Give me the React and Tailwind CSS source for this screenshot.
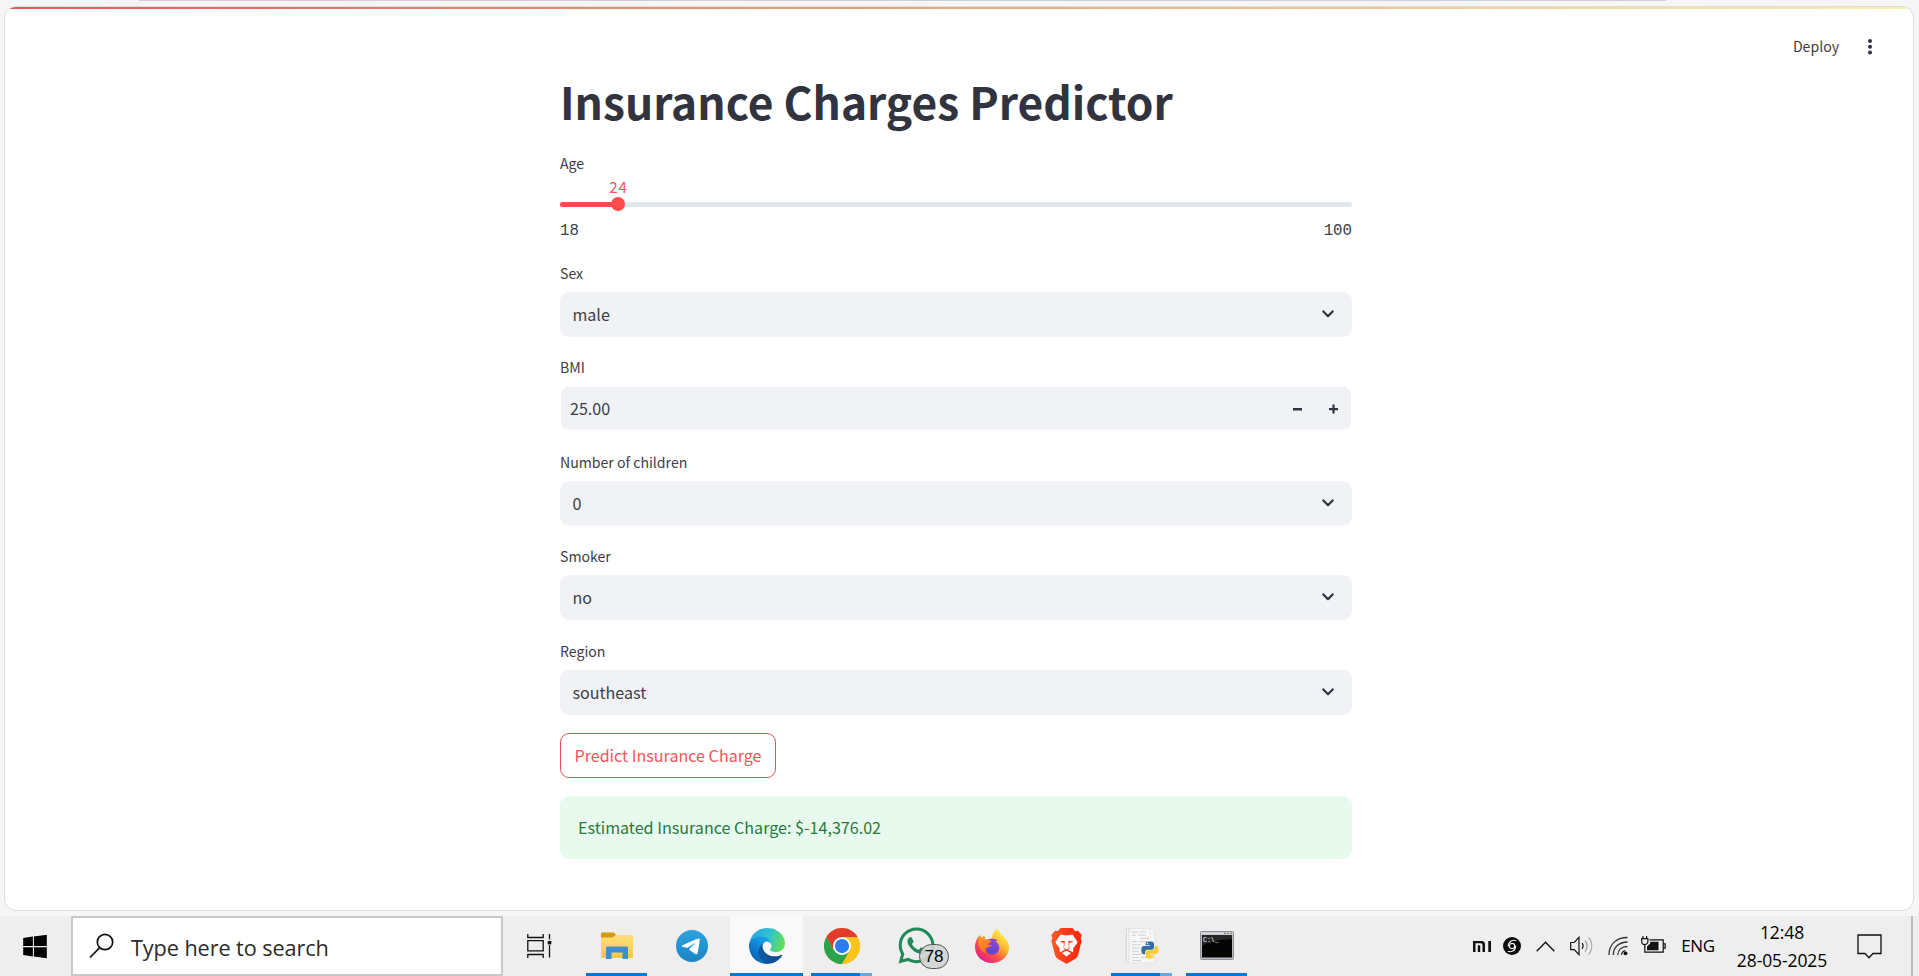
import React from "react";
import { FaWindows, FaWhatsapp } from "react-icons/fa";

const ui = "font-['Noto_Sans_CJK_SC','Noto_Sans',sans-serif]";

function Chevron() {
  return (
    <svg width="12" height="8" viewBox="0 0 12 8" fill="none" stroke="#31333f" strokeWidth="2.2" strokeLinecap="round" strokeLinejoin="round">
      <path d="M1.4 1.4 6 6.2l4.6-4.8" />
    </svg>
  );
}

function Field({ label, children }) {
  return (
    <div className="flex flex-col gap-2">
      <label className="h-[22px] text-[14.1px] leading-[22px] text-[#3c3e49]">{label}</label>
      {children}
    </div>
  );
}

function Select({ label, value }) {
  return (
    <Field label={label}>
      <div className="flex h-[45px] items-center justify-between rounded-[9px] bg-[#f0f2f6] pb-px pl-[12.4px] pr-[18px]">
        <span className="text-[16.1px] leading-[24px] text-[#3c3e49]">{value}</span>
        <Chevron />
      </div>
    </Field>
  );
}

function AgeSlider() {
  return (
    <div className="flex flex-col">
      <label className="h-[22px] text-[14.1px] leading-[22px] text-[#3c3e49]">Age</label>
      <div className="flex h-[22px] w-[117px] items-center justify-center pt-px text-[15.2px] leading-[20px] tracking-[0.9px] text-[#f65358]">24</div>
      <div className="relative mt-[6px] h-[5px] rounded-full bg-[#e4e6ed]">
        <div className="h-full w-[58px] rounded-full bg-[#ff4b4b]" />
        <div className="absolute left-[51px] top-[-5px] h-[14px] w-[14px] rounded-full bg-[#ff4b4b]" />
      </div>
      <div className="mt-[15px] flex h-[20px] items-center justify-between font-['Liberation_Mono',monospace] text-[15.75px] text-[#3c3e49]">
        <span>18</span>
        <span>100</span>
      </div>
    </div>
  );
}

function PredictorPage() {
  return (
    <div className="ml-[4px] mr-[5px] mt-[5px] flex h-[905px] flex-col overflow-hidden rounded-[12px] border border-[#dedede] bg-white">
      <div className="h-[2px] shrink-0 bg-linear-to-r from-[#da5a5f] via-[#eaa97c] to-[#f5f3a4]" />
      <div className="flex h-[62px] shrink-0 items-start justify-end pr-[37px] pt-[26px]">
        <span className="mr-[25px] text-[14.1px] leading-[22px] text-[#3c3e49]">Deploy</span>
        <svg className="mt-[3px]" width="12" height="18" viewBox="0 0 12 18" fill="#31333f">
          <circle cx="6" cy="3" r="2" /><circle cx="6" cy="8.8" r="2" /><circle cx="6" cy="14.6" r="2" />
        </svg>
      </div>
      <main className="ml-[555px] flex w-[792px] flex-col">
        <h1 className="h-[60px] whitespace-nowrap text-[44.3px] font-bold leading-[60px] text-[#31333f]">Insurance Charges Predictor</h1>
        <div className="mt-[21px]"><AgeSlider /></div>
        <div className="mt-[20px] flex flex-col gap-[19.4px]">
          <Select label="Sex" value="male" />
          <Field label="BMI">
            <div className="h-[45px] px-px pb-px pt-[1px]">
              <div className="flex h-[43px] items-center rounded-[8px] bg-[#f0f2f6] pl-[9px] pr-[13px]">
                <span className="flex-1 pb-px text-[16.1px] leading-[24px] text-[#3c3e49]">25.00</span>
                <svg width="9" height="10" viewBox="0 0 9 10" fill="#31333f"><rect y="4" width="9" height="2.5" /></svg>
                <svg className="ml-[27px]" width="9" height="10" viewBox="0 0 9 10" fill="#31333f"><rect y="4" width="9" height="2.2" /><rect x="3.4" y=".5" width="2.2" height="9" /></svg>
              </div>
            </div>
          </Field>
          <Select label="Number of children" value="0" />
          <Select label="Smoker" value="no" />
          <Select label="Region" value="southeast" />
        </div>
        <button className="mt-[18px] h-[45px] w-[216px] rounded-[9px] border border-[#e0525b] text-center text-[16.1px] leading-[41px] text-[#f65358]">Predict Insurance Charge</button>
        <div className="mt-[18px] flex h-[63px] items-center rounded-[9px] bg-[#e8f9ee] pb-px pl-[18px] text-[16.1px] leading-[24px] text-[#267a40]">Estimated Insurance Charge: $-14,376.02</div>
      </main>
    </div>
  );
}

function Folder() {
  return (
    <svg width="32" height="28" viewBox="0 0 32 28">
      <defs><linearGradient id="fo" x1="0" y1="0" x2="0" y2="1"><stop offset="0" stopColor="#ffdf79" /><stop offset="1" stopColor="#f7c64b" /></linearGradient></defs>
      <path d="M0 2a1.500 1.500 0 0 1 1.500-1.500H13l2 2.500L12.500 6H0z" fill="#d39b10" />
      <path d="M0 5.500h11.500L15 3h15.500A1.500 1.500 0 0 1 32 4.500V26H0z" fill="url(#fo)" />
      <path d="M5 27V16a1.500 1.500 0 0 1 1.500-1.500h19A1.500 1.500 0 0 1 27 16v11h-5.500v-6.500h-11V27z" fill="#3f8fd0" />
    </svg>
  );
}

function Telegram() {
  return (
    <svg width="32" height="32" viewBox="0 0 240 240">
      <defs><linearGradient id="tg" x1="0" y1="0" x2="0" y2="1"><stop offset="0" stopColor="#2ba3e0" /><stop offset="1" stopColor="#1c85c4" /></linearGradient></defs>
      <circle cx="120" cy="120" r="120" fill="url(#tg)" />
      <path d="M46 116C84 98 112 86 124.300 81C157.600 67 168 64 172 64C176 64 178 67 178 72C176 100 168 142 163 168C161 177 157.200 182 153 182C146 182 141 177 134 172L104 151C94 144 103 138 110 131L142 101C143 99 142 97 139 99L92 130C86 134 82 135 77 133L50 125C42 122 41 118 46 116z" fill="#fff" />
    </svg>
  );
}

function Edge() {
  return (
    <svg width="36" height="36" viewBox="0 0 256 256">
      <defs>
        <linearGradient id="e1" x1="60" y1="178" x2="238" y2="178" gradientUnits="userSpaceOnUse"><stop offset="0" stopColor="#0c59a4" /><stop offset="1" stopColor="#114a8b" /></linearGradient>
        <linearGradient id="e2" x1="150" y1="90" x2="45" y2="215" gradientUnits="userSpaceOnUse"><stop offset="0" stopColor="#1b9de2" /><stop offset=".3" stopColor="#1595df" /><stop offset="1" stopColor="#0b68bd" /></linearGradient>
        <linearGradient id="e3" x1="20" y1="60" x2="245" y2="130" gradientUnits="userSpaceOnUse"><stop offset="0" stopColor="#30a9e0" /><stop offset=".5" stopColor="#2fc3cf" /><stop offset="1" stopColor="#66e04f" /></linearGradient>
      </defs>
      <path fill="url(#e1)" d="M231 190.500c-3.400 1.800-6.900 3.400-10.500 4.700a101 101 0 0 1-35.900 6.500c-47.300 0-88.500-32.500-88.500-74.300a31.500 31.500 0 0 1 16.400-27.300c-42.800 1.800-53.800 46.400-53.800 72.500 0 73.900 68.100 81.400 82.800 81.400 7.900 0 19.800-2.300 27-4.600l1.300-.4a128.300 128.300 0 0 0 66.600-52.800 4 4 0 0 0-5.400-5.700z" />
      <path fill="url(#e2)" d="M105.700 241.400a79.200 79.200 0 0 1-22.700-21.300 80.700 80.700 0 0 1 29.500-120c3.200-1.500 8.500-4.100 15.600-4a32.400 32.400 0 0 1 25.700 13 31.900 31.900 0 0 1 6.300 18.700c0-.2 24.500-79.600-80-79.600-43.900 0-80 41.700-80 78.200a130.200 130.200 0 0 0 12.100 56 128 128 0 0 0 156.400 67 75.500 75.500 0 0 1-62.800-8z" />
      <path fill="url(#e3)" d="M152.300 148.900c-.9 1-3.400 2.500-3.400 5.600 0 2.600 1.700 5.200 4.800 7.300 14.300 10 41.400 8.600 41.500 8.600a59.600 59.600 0 0 0 30.300-8.300 61.400 61.400 0 0 0 30.400-52.900c.3-22.400-8-37.300-11.300-43.900C223.500 23.900 177.700 0 128 0A128 128 0 0 0 0 126.200c.5-36.500 36.800-66 80-66 3.500 0 23.500.3 42 10a72.600 72.600 0 0 1 30.900 29.300c6.100 10.600 7.200 24.100 7.200 29.500s-2.700 13.300-7.800 19.900z" />
    </svg>
  );
}

function Chrome() {
  return (
    <svg width="36" height="36" viewBox="0 0 48 48">
      <circle cx="24" cy="24" r="24" fill="#fcc31e" />
      <path d="M3.220 12A24 24 0 0 1 44.780 12H24L13.600 30z" fill="#e33b2e" />
      <path d="M3.220 12A24 24 0 0 0 24 48L34.400 30H13.600z" fill="#2da24c" />
      <path d="M24 12h20.780A24 24 0 0 1 24 48l10.400-18z" fill="#fcc31e" />
      <circle cx="24" cy="24" r="12" fill="#fff" />
      <circle cx="24" cy="24" r="9.500" fill="#2d7bf0" />
    </svg>
  );
}

function Firefox() {
  return (
    <svg width="34" height="34" viewBox="0 0 34 34">
      <defs>
        <linearGradient id="f1" x1="28" y1="4" x2="6" y2="32" gradientUnits="userSpaceOnUse"><stop offset="0" stopColor="#fff04a" /><stop offset=".35" stopColor="#ffb02e" /><stop offset=".65" stopColor="#ff4f44" /><stop offset="1" stopColor="#e0198e" /></linearGradient>
        <linearGradient id="f2" x1="22" y1="9" x2="13" y2="25" gradientUnits="userSpaceOnUse"><stop offset="0" stopColor="#9a45e0" /><stop offset="1" stopColor="#5a45c4" /></linearGradient>
        <linearGradient id="f3" x1="3" y1="8" x2="14" y2="22" gradientUnits="userSpaceOnUse"><stop offset="0" stopColor="#ff9a25" /><stop offset="1" stopColor="#ff6a2c" /></linearGradient>
      </defs>
      <path d="M21.500 0c2.500 1.500 4 3.600 4.600 5.600 3.100 1.600 7.900 7.600 7.900 12.600C34 27 26.500 34 17 34S0 27 0 18C0 13 2.500 8 5 6l.4 3.500L9 7l1.600 4L17 9c0-4 2-7 4.500-9z" fill="url(#f1)" />
      <path d="M13 10.500c3.500-1.500 7-1 10 1-1 .4-2 .5-2.600.9 2.600 1.300 4 3.600 3.900 6.400a7 7 0 0 1-14 0c0-3.600.7-6.800 2.700-8.300z" fill="url(#f2)" />
      <path d="M3.500 10.500 5 6.500l1.600 2.300L9.500 7l.7 3.600c2-.3 4.300.1 6 1.400.3 1.800-3.200 2.300-3.700 3.400 1.500.4 3 .2 4.200.9-.7 1.600-2.700 1.900-4.400 2.400-2.100.6-2.200 3.300-.2 5.100C6 23.500 2.500 17 3.500 10.500z" fill="url(#f3)" />
    </svg>
  );
}

function Brave() {
  return (
    <svg width="31" height="36" viewBox="0 0 31 36">
      <defs><linearGradient id="br" x1="0" y1="0" x2="1" y2="0"><stop offset="0" stopColor="#ff5a22" /><stop offset=".5" stopColor="#fb3a1c" /><stop offset="1" stopColor="#ff2600" /></linearGradient></defs>
      <path d="M9.600 0h11.800l2.900 3.200 2.700-.5 3.700 4.200-1 3 .9 3-3.500 13.800c-.6 2.200-1.400 3-3 4.200L17 35.100a2.500 2.500 0 0 1-3 0l-7.100-4.200c-1.600-1.200-2.400-2-3-4.200L.4 12.900l.9-3-1-3L4 2.700l2.700.5z" fill="url(#br)" />
      <path d="M9.500 6.500c1.500.1 3.400.9 6 .9s4.500-.8 6-.9c1 1.600 3.600 5 5 7.400-.2 1.800-3.500 5-4.300 6.500.5 1.600.3 2.800-.6 3.800-1.600-1.300-3.300-2-4.700-2.500l1.300-1c.6-2-.7-4.500.4-6l4-.9c-2-1.400-4.800-.6-6.500-.9h-1.200c-1.700.3-4.500-.5-6.500.9l4 .9c1.100 1.500-.2 4 .4 6l1.300 1c-1.400.5-3.100 1.200-4.700 2.500-.9-1-1.100-2.200-.6-3.800-.8-1.500-4.100-4.700-4.300-6.500 1.400-2.400 4-5.800 5-7.400z" fill="#fff" />
      <path d="M13.800 12.500h3.400l.7 7.400-2.400 1.600-2.400-1.600zM15.500 22.800c1.600.5 3 1.400 4.300 2.400l-4.300 3.400-4.300-3.400c1.300-1 2.700-1.900 4.300-2.400z" fill="#fff" />
    </svg>
  );
}

function PythonFile() {
  return (
    <svg width="34" height="36" viewBox="0 0 34 36">
      <path d="M1 .5h24l5 5.500V35H1z" fill="#f6f6f6" stroke="#dedede" strokeWidth=".7" />
      <path d="M25 .5V6h5" fill="#fff" stroke="#dadada" strokeWidth=".7" />
      <path d="M1.500 1v33M4 1v33" stroke="#c4c4c4" strokeWidth="1" strokeDasharray="1 1" />
      <path d="M7 4h6m2 0h6M7 7.200h4m2 0h8M15 10.400h9M7 13.600h5m2 0h8M7 16.800h9M7 20h8M7 23.200h7M7 26.400h9M7 29.600h7m2 0h6M7 32.600h9" stroke="#cacaca" strokeWidth=".9" />
      <g transform="translate(16.300 13.500) scale(.067)">
        <path d="M126.900.07c-64.800 0-60.800 28.100-60.800 28.100l.07 29.100h61.900v8.700H41.600S.15 61.300.15 126.900c0 65.700 36.200 63.300 36.200 63.300h21.600v-30.400s-1.200-36.200 35.600-36.200h61.300s34.500.56 34.500-33.300V34.300S194.600.07 126.900.07zM92.800 19.700a11.100 11.100 0 1 1 0 22.300 11.100 11.100 0 0 1 0-22.300z" fill="#336f9f" />
        <path d="M126.900.07c-64.800 0-60.800 28.100-60.800 28.100l.07 29.100h61.900v8.700H41.600S.15 61.300.15 126.900c0 65.700 36.200 63.300 36.200 63.300h21.600v-30.400s-1.200-36.200 35.600-36.200h61.300s34.500.56 34.500-33.300V34.300S194.600.07 126.900.07zM92.800 19.700a11.100 11.100 0 1 1 0 22.300 11.100 11.100 0 0 1 0-22.300z" fill="#fbcb3a" transform="rotate(180 128 127)" />
      </g>
    </svg>
  );
}

function Terminal() {
  return (
    <svg width="34" height="29" viewBox="0 0 34 29">
      <rect x=".5" y=".5" width="33" height="28" rx="1" fill="#b9bcc0" stroke="#8d9094" />
      <path d="M1 1.500h32v2H1z" fill="#d9dbde" />
      <path d="M24 2.400h2m1.500 0h1.500m1.500 0h1.500" stroke="#777" strokeWidth="1.200" />
      <rect x="2" y="4" width="30" height="22.500" fill="#050505" />
      <path d="M2 4h30v4C20 8.500 8 11 2 15z" fill="#3b3b3b" opacity=".6" />
      <text x="3" y="11" fontSize="6.500" fill="#fff" fontFamily="Liberation Mono, monospace">C:\_</text>
    </svg>
  );
}

function Task({ children, bar, active }) {
  return (
    <div className="relative flex h-full w-[75px] items-center justify-center">
      {active && <div className="absolute inset-y-0 left-[1px] w-[73px] bg-[#f9f9f9]" />}
      <div className="relative -mt-[1px]">{children}</div>
      {bar === "one" && <div className="absolute bottom-0 left-[7px] h-[3px] w-[61px] bg-[#0b76d0]" />}
      {bar === "wide" && <div className="absolute bottom-0 left-[1px] h-[3px] w-[73px] bg-[#0b76d0]" />}
      {bar === "two" && (
        <div className="absolute bottom-0 left-[7px] flex h-[3px] w-[61px]">
          <div className="w-[49px] bg-[#0b76d0]" /><div className="w-[12px] bg-[#6aa8de]" />
        </div>
      )}
    </div>
  );
}

function Taskbar() {
  return (
    <div className="flex h-[60px] items-stretch bg-[#eeeeee] font-['Open_Sans','Noto_Sans',sans-serif] text-black">
      <div className="flex w-[71px] items-center justify-center pr-px"><FaWindows className="h-[27px] w-[24px]" /></div>
      <div className="flex w-[432px] items-center border-2 border-[#c8c8c8] bg-white pl-[16px]">
        <svg width="25" height="26" viewBox="0 0 25 26" fill="none" stroke="#111" strokeWidth="1.700"><circle cx="16" cy="9" r="7.700" /><path d="M10.700 14.600 1 24.500" /></svg>
        <span className="ml-[17px] mt-[3px] text-[21.700px] leading-[30px] tracking-[-0.100px] text-[#2b2b2b]">Type here to search</span>
      </div>
      <div className="flex w-[76px] items-center justify-center pr-[3px]">
        <svg width="25" height="24" viewBox="0 0 25 24" fill="none" stroke="#111" strokeWidth="1.300"><path d="M.8 0v3.500h15.400V0M.8 24v-3.500h15.400V24M.8 6.600h15.400v10.300H.8zM22.500 0v5.500M22.500 11v12.500" /><path d="M20.700 7h3.600v3.400h-3.600z" fill="#111" stroke="none" /></svg>
      </div>
      <Task bar="one"><Folder /></Task>
      <Task><Telegram /></Task>
      <Task bar="wide" active><Edge /></Task>
      <Task bar="two"><Chrome /></Task>
      <Task>
        <FaWhatsapp className="h-[41px] w-[41px] text-[#1f8a58]" />
        <div className="absolute left-[23px] top-[19px] flex h-[25px] w-[30px] items-center justify-center rounded-full border border-[#555] bg-[#d2d4d3]/90 font-['Liberation_Sans',sans-serif] text-[17px] leading-none">78</div>
      </Task>
      <Task><Firefox /></Task>
      <Task><Brave /></Task>
      <Task bar="two"><PythonFile /></Task>
      <Task bar="one"><Terminal /></Task>
      <div className="flex flex-1 items-stretch justify-end">
        <div className="flex w-[30px] items-center justify-center">
          <svg width="18" height="11" viewBox="0 0 18 11" fill="#111"><path d="M0 0h8.500A3.500 3.500 0 0 1 12 3.500V11H9.500V4a1.700 1.700 0 0 0-1.700-1.700H2.500V11H0zM4.800 4.300h2.400V11H4.800zM15.300 0H18v11h-2.700z" /></svg>
        </div>
        <div className="flex w-[30px] items-center justify-center">
          <svg width="18" height="18" viewBox="0 0 18 18" fill="none"><circle cx="9" cy="9" r="9" fill="#0a0a0a" /><circle cx="9" cy="9" r="2.700" stroke="#eee" strokeWidth="1.200" /><path d="M13.200 3.700C9.500 2.300 5.300 4.500 5.200 9.500M4.800 14.300c3.700 1.400 7.900-.8 8-5.800" stroke="#eee" strokeWidth="1.100" /></svg>
        </div>
        <div className="flex w-[36px] items-center justify-center">
          <svg width="19" height="11" viewBox="0 0 19 11" fill="none" stroke="#111" strokeWidth="1.400"><path d="M.7 10.200 9.500 1.200l8.800 9" /></svg>
        </div>
        <div className="flex w-[36px] items-center justify-center">
          <svg width="23" height="20" viewBox="0 0 23 20" fill="none" stroke="#111" strokeWidth="1.200"><path d="M.7 6.500h3.500L9 1.300v17.400l-4.800-5H.7z" /><path d="M12 7.200c1.300 1.600 1.300 4 0 5.600" /><path d="M15 4.500c2.800 3 2.800 8 0 11" stroke="#999" /><path d="M18.500 1.500c4.300 4.600 4.300 12.400 0 17" stroke="#aaa" /></svg>
        </div>
        <div className="flex w-[38px] items-center justify-center">
          <svg width="20" height="20" viewBox="0 0 20 20" fill="none" stroke="#333" strokeWidth="1.300"><path d="M1 19C1 8 8.500 1.500 19.500 1.500M5.300 19C5.300 11 11 6.200 19.500 6M9.800 19c0-5 3.700-8.500 9.700-8.500M13.500 19c.2-2.500 2-4 4-4.300" /><circle cx="17.500" cy="17.300" r="1.900" fill="#111" stroke="none" /></svg>
        </div>
        <div className="flex w-[32px] items-center justify-center pb-[3px]">
          <svg width="25" height="18" viewBox="0 0 25 18" fill="none" stroke="#111" strokeWidth="1.200"><path d="M8.500 3.800h13.700v12.400H3.800v-6M22.500 7.800h1.700v4.400h-1.700" /><path d="M9.200 5.800h8.300v8.400H6v-3.700l3.200-3z" fill="#111" stroke="none" /><path d="M2 0v2.600M5.600 0v2.600M.7 2.700h6.200v2.800a3.100 3.100 0 0 1-6.200 0zM3.800 8.500V11" fill="#eee" /></svg>
        </div>
        <div className="flex w-[58px] items-center justify-center text-[17px] tracking-[-0.300px]">ENG</div>
        <div className="flex w-[110px] flex-col items-center pt-[2px] text-[17.500px] leading-[28px] tracking-[-0.100px]"><span>12:48</span><span>28-05-2025</span></div>
        <div className="flex w-[64px] items-center justify-center">
          <svg width="25" height="25" viewBox="0 0 25 25" fill="none" stroke="#111" strokeWidth="1.300"><path d="M1 1h23v18.500h-8l-4 4.300-4-4.300H1z" /></svg>
        </div>
        <div className="ml-[10px] mr-[6px] w-[2px] bg-[#bcbcbc]" />
      </div>
    </div>
  );
}

export default function App() {
  return (
    <div className={`flex h-[976px] w-[1919px] flex-col overflow-hidden bg-[#f6f6f7] ${ui}`}>
      <div className="ml-[139px] h-px w-[1527px] shrink-0 bg-[#d3cdd6]" />
      <PredictorPage />
      <div className="mt-auto"><Taskbar /></div>
    </div>
  );
}
